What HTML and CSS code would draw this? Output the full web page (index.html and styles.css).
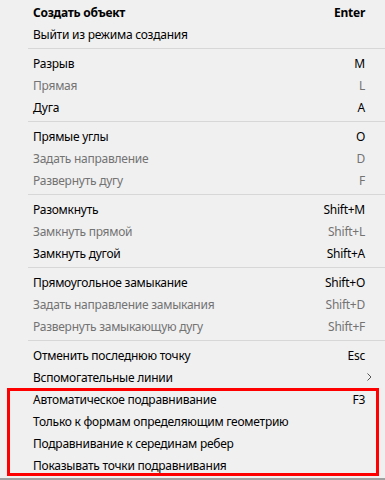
FILE: index.html
```html
<!DOCTYPE html>
<html lang="ru">
<head>
<meta charset="utf-8">
<title>Меню</title>
<link rel="stylesheet" href="styles.css">
</head>
<body>
<div class="menu">
  <div class="item bold"><span class="label">Создать объект</span><span class="key">Enter</span></div>
  <div class="item"><span class="label">Выйти из режима создания</span><span class="key"></span></div>
  <div class="sep"></div>
  <div class="item"><span class="label">Разрыв</span><span class="key">M</span></div>
  <div class="item disabled"><span class="label">Прямая</span><span class="key">L</span></div>
  <div class="item"><span class="label">Дуга</span><span class="key">A</span></div>
  <div class="sep"></div>
  <div class="item"><span class="label">Прямые углы</span><span class="key">O</span></div>
  <div class="item disabled"><span class="label">Задать направление</span><span class="key">D</span></div>
  <div class="item disabled"><span class="label">Развернуть дугу</span><span class="key">F</span></div>
  <div class="sep"></div>
  <div class="item"><span class="label">Разомкнуть</span><span class="key">Shift+M</span></div>
  <div class="item disabled"><span class="label">Замкнуть прямой</span><span class="key">Shift+L</span></div>
  <div class="item"><span class="label">Замкнуть дугой</span><span class="key">Shift+A</span></div>
  <div class="sep"></div>
  <div class="item"><span class="label">Прямоугольное замыкание</span><span class="key">Shift+O</span></div>
  <div class="item disabled"><span class="label">Задать направление замыкания</span><span class="key">Shift+D</span></div>
  <div class="item disabled"><span class="label">Развернуть замыкающую дугу</span><span class="key">Shift+F</span></div>
  <div class="sep"></div>
  <div class="item"><span class="label">Отменить последнюю точку</span><span class="key">Esc</span></div>
  <div class="item submenu"><span class="label">Вспомогательные линии</span><svg class="arrow" width="5" height="8" viewBox="0 0 5 8"><path d="M0.5 0.5 L4 4 L0.5 7.5" fill="none" stroke="#555" stroke-width="1"/></svg></div>
  <div class="group">
    <div class="item"><span class="label">Автоматическое подравнивание</span><span class="key">F3</span></div>
    <div class="item"><span class="label">Только к формам определяющим геометрию</span><span class="key"></span></div>
    <div class="item"><span class="label">Подравнивание к серединам ребер</span><span class="key"></span></div>
    <div class="item"><span class="label">Показывать точки подравнивания</span><span class="key"></span></div>
  </div>
</div>
</body>
</html>
```
FILE: styles.css
```css
html, body {
  margin: 0;
  padding: 0;
  background: #f0f0f0;
}
body {
  width: 385px;
  height: 480px;
  overflow: hidden;
  font-family: "Noto Sans", "Open Sans", sans-serif;
  font-size: 12px;
  letter-spacing: -0.25px;
  color: #000;
}
.menu {
  display: flex;
  flex-direction: column;
  padding-top: 1px;
  height: 480px;
  box-sizing: border-box;
  border-bottom: 2px solid #a0a0a0;
}
.item {
  display: flex;
  align-items: center;
  justify-content: space-between;
  height: 22px;
  padding: 0 20px 0 33px;
  white-space: nowrap;
}
.bold { font-weight: bold; }
.disabled { color: #737373; }
.submenu { padding-right: 13px; }
.arrow { display: block; }
.sep {
  height: 7px;
  margin-left: 28px;
  display: flex;
  align-items: center;
}
.sep::before {
  content: "";
  display: block;
  width: 100%;
  height: 1px;
  background: #d7d7d7;
}
.group {
  position: relative;
}
.group::after {
  content: "";
  position: absolute;
  top: 0;
  bottom: 0;
  left: 7px;
  right: 6px;
  border: 3px solid #ff0000;
  pointer-events: none;
}
```
